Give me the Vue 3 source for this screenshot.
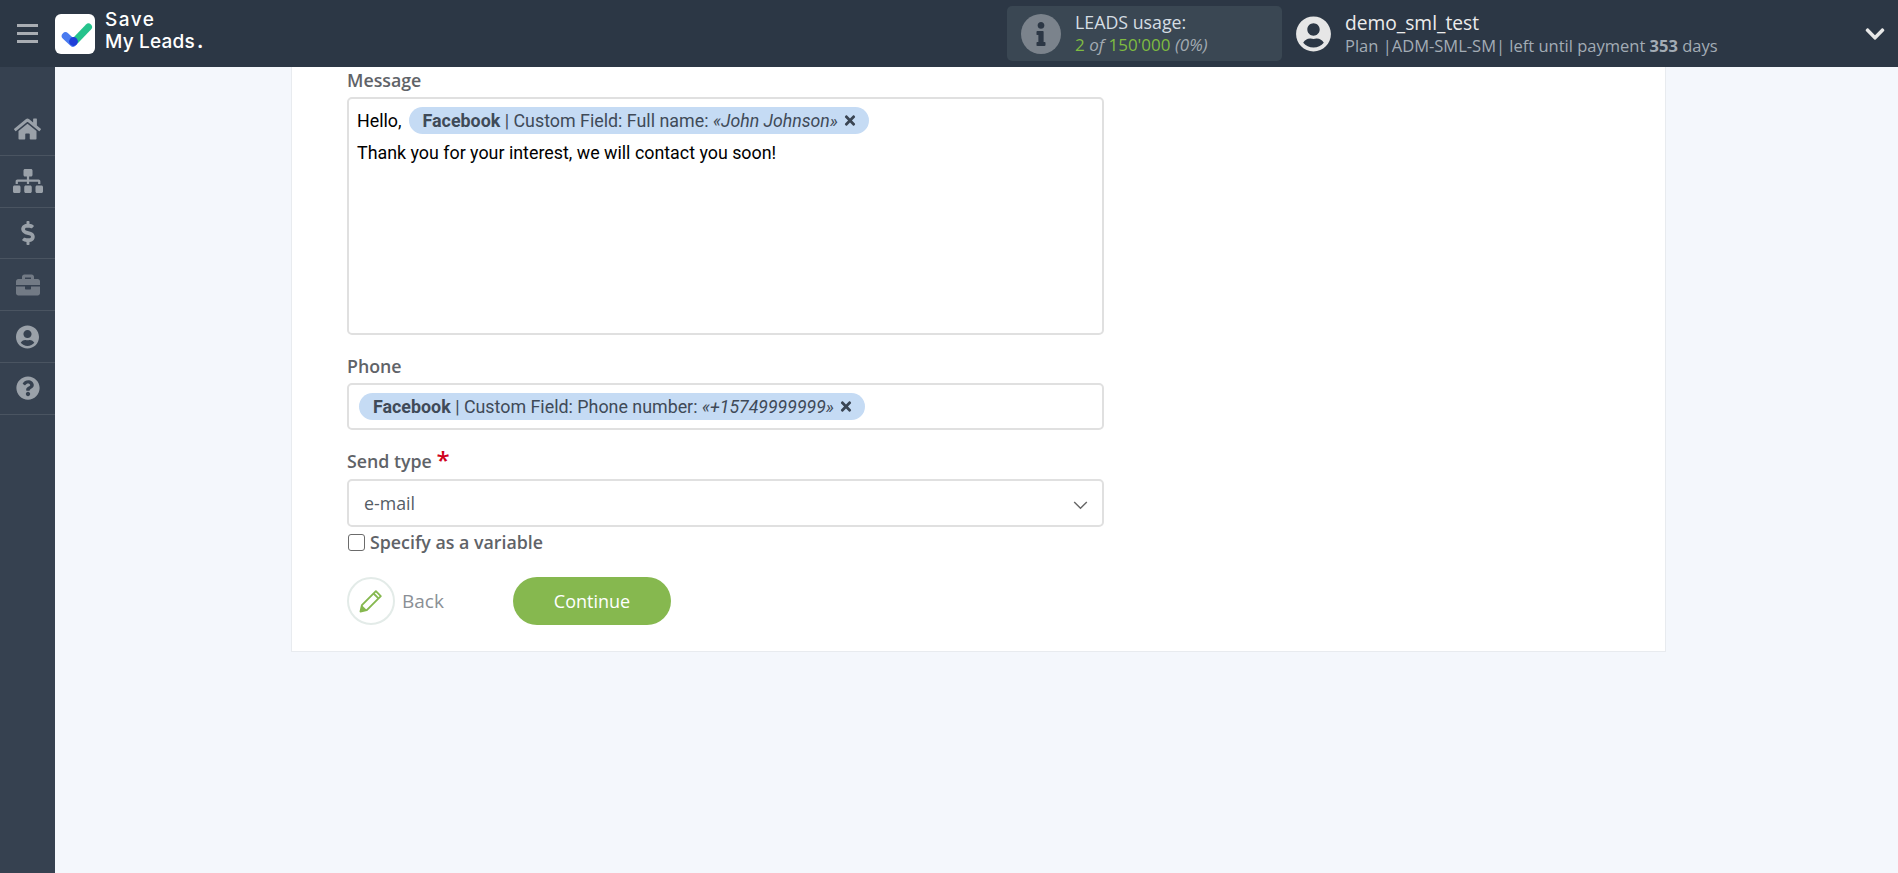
<script setup>
const nav = [
  { vb: '0 0 576 512', w: 29, op: 1, d: 'M280.37 148.26L96 300.11V464a16 16 0 0 0 16 16l112.06-.29a16 16 0 0 0 15.92-16V368a16 16 0 0 1 16-16h64a16 16 0 0 1 16 16v95.64a16 16 0 0 0 16 16.05L464 480a16 16 0 0 0 16-16V300L295.67 148.26a12.19 12.19 0 0 0-15.3 0zM571.6 251.47L488 182.56V44.05a12 12 0 0 0-12-12h-56a12 12 0 0 0-12 12v72.61L318.47 43a48 48 0 0 0-61 0L4.34 251.47a12 12 0 0 0-1.6 16.9l25.5 31A12 12 0 0 0 45.15 301l235.22-193.74a12.19 12.19 0 0 1 15.3 0L530.9 301a12 12 0 0 0 16.9-1.6l25.5-31a12 12 0 0 0-1.7-16.93z' },
  { vb: '0 0 640 512', w: 30, op: 1, d: 'M128 352H32c-17.67 0-32 14.33-32 32v96c0 17.67 14.33 32 32 32h96c17.67 0 32-14.33 32-32v-96c0-17.67-14.33-32-32-32zm-24-80h192v48h48v-48h192v48h48v-57.59c0-21.17-17.23-38.41-38.41-38.41H344v-64h40c17.67 0 32-14.33 32-32V32c0-17.67-14.33-32-32-32H256c-17.67 0-32 14.33-32 32v96c0 17.67 14.33 32 32 32h40v64H94.41C73.23 224 56 241.23 56 262.41V320h48v-48zm264 80h-96c-17.67 0-32 14.33-32 32v96c0 17.67 14.33 32 32 32h96c17.67 0 32-14.33 32-32v-96c0-17.67-14.33-32-32-32zm240 0h-96c-17.67 0-32 14.33-32 32v96c0 17.67 14.33 32 32 32h96c17.67 0 32-14.33 32-32v-96c0-17.67-14.33-32-32-32z' },
  { vb: '0 0 288 512', w: 14, op: 1, d: 'M209.2 233.4l-108-31.6C88.7 198.2 80 186.5 80 173.5c0-16.3 13.2-29.5 29.5-29.5h66.3c12.2 0 24.2 3.7 34.2 10.5 6.1 4.1 14.3 3.1 19.5-2l34.8-34c7.1-6.9 6.1-18.4-1.8-24.5C238 74.8 207.4 64.1 176 64V16c0-8.8-7.2-16-16-16h-32c-8.8 0-16 7.2-16 16v48h-2.5C45.8 64-5.4 118.7.5 183.6c4.2 46.1 39.4 83.6 83.8 96.6l102.5 30c12.5 3.7 21.2 15.3 21.2 28.3 0 16.3-13.2 29.5-29.5 29.5h-66.3C100 368 88 364.3 78 357.5c-6.1-4.1-14.3-3.1-19.5 2l-34.8 34c-7.1 6.9-6.1 18.4 1.8 24.5 24.5 19.2 55.1 29.9 86.5 30v48c0 8.8 7.2 16 16 16h32c8.8 0 16-7.2 16-16v-48.2c46.6-.9 90.3-28.6 105.7-72.7 21.5-61.6-14.6-124.8-72.5-141.7z' },
  { vb: '0 0 512 512', w: 24, op: 0.6, d: 'M320 336c0 8.84-7.16 16-16 16h-96c-8.84 0-16-7.16-16-16v-48H0v144c0 25.6 22.4 48 48 48h416c25.6 0 48-22.4 48-48V288H320v48zm144-208h-80V80c0-25.6-22.4-48-48-48H176c-25.6 0-48 22.4-48 48v48H48c-25.6 0-48 22.4-48 48v80h512v-80c0-25.6-22.4-48-48-48zm-144 0H192V96h128v32z' },
  { vb: '0 0 496 512', w: 23, op: 1, d: 'M248 8C111 8 0 119 0 256s111 248 248 248 248-111 248-248S385 8 248 8zm0 96c48.6 0 88 39.4 88 88s-39.4 88-88 88-88-39.4-88-88 39.4-88 88-88zm0 344c-58.7 0-111.3-26.6-146.5-68.2 18.8-35.4 55.6-59.8 98.5-59.8 2.4 0 4.8.4 7.1 1.1 13 4.2 26.6 6.9 40.9 6.9 14.3 0 28-2.7 40.9-6.9 2.3-.7 4.7-1.1 7.1-1.1 42.9 0 79.7 24.4 98.5 59.8C359.3 421.4 306.7 448 248 448z' },
  { vb: '0 0 512 512', w: 24, op: 1, d: 'M504 256c0 136.997-111.043 248-248 248S8 392.997 8 256C8 119.083 119.043 8 256 8s248 111.083 248 248zM262.655 90c-54.497 0-89.255 22.957-116.549 63.758-3.536 5.286-2.353 12.415 2.715 16.258l34.699 26.31c5.205 3.947 12.621 3.008 16.665-2.122 17.864-22.658 30.113-35.797 57.303-35.797 20.429 0 45.698 13.148 45.698 32.958 0 14.976-12.363 22.667-32.534 33.976C247.128 238.528 216 254.941 216 296v4c0 6.627 5.373 12 12 12h56c6.627 0 12-5.373 12-12v-1.333c0-28.462 83.186-29.647 83.186-106.667 0-58.002-60.165-102-116.531-102zM256 338c-25.365 0-46 20.635-46 46 0 25.364 20.635 46 46 46s46-20.636 46-46c0-25.365-20.635-46-46-46z' },
]
const times = 'M242.72 256l100.07-100.07c12.28-12.28 12.28-32.19 0-44.48l-22.24-22.24c-12.28-12.28-32.19-12.28-44.48 0L176 189.28 75.93 89.21c-12.28-12.28-32.19-12.28-44.48 0L9.21 111.45c-12.28 12.28-12.28 32.19 0 44.48L109.28 256 9.21 356.07c-12.28 12.28-12.28 32.19 0 44.48l22.24 22.24c12.28 12.28 32.2 12.28 44.48 0L176 322.72l100.07 100.07c12.28 12.28 32.2 12.28 44.48 0l22.24-22.24c12.28-12.28 12.28-32.19 0-44.48L242.72 256z'
</script>

<template>
  <div class="page">
    <header class="top">
      <div class="burger"><i></i><i></i><i></i></div>
      <div class="logo-box">
        <svg viewBox="0 0 40 40" width="40" height="40">
          <rect width="40" height="40" rx="6" fill="#fff" />
          <path d="M21 26 L33.5 13" stroke="#25c38c" stroke-width="7" stroke-linecap="round" fill="none" />
          <path d="M10.5 22 L18 29" stroke="#4a7bf0" stroke-width="7.5" stroke-linecap="round" fill="none" />
          <circle cx="18.5" cy="27.5" r="4.4" fill="#1f3fd8" />
        </svg>
      </div>
      <div class="logo-text"><div class="l1">Save</div><div class="l2">My Leads<span class="dot">.</span></div></div>
      <div class="usage">
        <div class="info-circle">
          <svg viewBox="0 0 192 512" width="10" height="24"><path fill="#2c3745" d="M20 424.229h20V279.771H20c-11.046 0-20-8.954-20-20V212c0-11.046 8.954-20 20-20h112c11.046 0 20 8.954 20 20v212.229h20c11.046 0 20 8.954 20 20V492c0 11.046-8.954 20-20 20H20c-11.046 0-20-8.954-20-20v-47.771c0-11.046 8.954-20 20-20zM96 0C56.235 0 24 32.235 24 72s32.235 72 72 72 72-32.235 72-72S135.764 0 96 0z" /></svg>
        </div>
        <div class="usage-text">
          <div class="usage-title">LEADS usage:</div>
          <div class="usage-num"><span class="g">2</span> <em>of</em> <span class="g">150'000</span> <em>(0%)</em></div>
        </div>
      </div>
      <svg class="avatar" viewBox="0 0 496 512" width="35" height="36"><path fill="#e6e6e6" d="M248 8C111 8 0 119 0 256s111 248 248 248 248-111 248-248S385 8 248 8zm0 96c48.6 0 88 39.4 88 88s-39.4 88-88 88-88-39.4-88-88 39.4-88 88-88zm0 344c-58.7 0-111.3-26.6-146.5-68.2 18.8-35.4 55.6-59.8 98.5-59.8 2.4 0 4.8.4 7.1 1.1 13 4.2 26.6 6.9 40.9 6.9 14.3 0 28-2.7 40.9-6.9 2.3-.7 4.7-1.1 7.1-1.1 42.9 0 79.7 24.4 98.5 59.8C359.3 421.4 306.7 448 248 448z" /></svg>
      <div class="user">
        <div class="user-name">demo_sml_test</div>
        <div class="user-plan">Plan |ADM-SML-SM| left until payment <b>353</b> days</div>
      </div>
      <svg class="chev" viewBox="0 0 448 512" width="20" height="22"><path fill="#e8e8e8" d="M207.029 381.476L12.686 187.132c-9.373-9.373-9.373-24.569 0-33.941l22.667-22.667c9.357-9.357 24.522-9.375 33.901-.04L224 284.505l154.745-154.021c9.379-9.335 24.544-9.317 33.901.04l22.667 22.667c9.373 9.373 9.373 24.569 0 33.941L240.971 381.476c-9.373 9.372-24.569 9.372-33.942 0z" /></svg>
    </header>

    <div class="body">
      <aside class="side">
        <div v-for="(n, i) in nav" :key="i" class="side-item">
          <svg :viewBox="n.vb" :width="n.w" height="24" :style="{ opacity: n.op }"><path fill="#9aa1a9" :d="n.d" /></svg>
        </div>
      </aside>
      <main class="main">
        <section class="card">
          <label class="lbl first">Message</label>
          <div class="box msg">
            <div class="line">Hello, <span class="tag tag-a"><b>Facebook</b> | Custom Field: Full name: <em>«John Johnson»</em><svg viewBox="0 0 352 512" width="12" height="15"><path fill="#3a4553" :d="times" /></svg></span></div>
            <div class="line2">Thank you for your interest, we will contact you soon!</div>
          </div>
          <label class="lbl ph">Phone</label>
          <div class="box phone">
            <span class="tag"><b>Facebook</b> | Custom Field: Phone number: <em>«+15749999999»</em><svg viewBox="0 0 352 512" width="12" height="15"><path fill="#3a4553" :d="times" /></svg></span>
          </div>
          <label class="lbl st">Send type <span class="req">*</span></label>
          <div class="box select">
            <span>e-mail</span>
            <svg viewBox="0 0 16 10" width="15" height="9"><path d="M1 1.2 L8 8 L15 1.2" fill="none" stroke="#666" stroke-width="1.6" /></svg>
          </div>
          <div class="check"><span class="cb"></span><span class="check-l">Specify as a variable</span></div>
          <div class="actions">
            <div class="back">
              <span class="circle">
                <svg viewBox="0 0 24 24" width="28" height="28"><g fill="none" stroke="#86b84f" stroke-width="1.6" stroke-linejoin="round"><path d="M3 21 L4.2 15.6 L16.2 3.6 L20.4 7.8 L8.4 19.8 Z" /><path d="M14.2 5.6 L18.4 9.8" /></g><path d="M3 21 L4.2 15.6 L8.4 19.8 Z" fill="#86b84f" /></svg>
              </span>
              <span class="back-l">Back</span>
            </div>
            <button class="cont">Continue</button>
          </div>
        </section>
      </main>
    </div>
  </div>
</template>

<style>
html, body { margin: 0; background: #f4f7fc; }
</style>

<style scoped>
.page { width: 1898px; height: 873px; display: flex; flex-direction: column; overflow: hidden; font-family: "Open Sans", sans-serif; }
.top { height: 67px; flex: none; background: #2c3745; display: flex; align-items: center; color: #fff; }
.burger { width: 21px; margin-left: 17px; display: flex; flex-direction: column; gap: 5px; }
.burger i { display: block; height: 3px; background: #a9adb3; }
.logo-box { margin-left: 17px; width: 40px; height: 40px; }
.logo-text { margin-left: 10px; font-family: Inter, sans-serif; font-weight: 500; font-size: 19px; line-height: 22px; width: 95px; margin-top: -6px; white-space: nowrap; }
.l1 { letter-spacing: 1.5px; }
.l2 { letter-spacing: 0.2px; }
.dot { margin-left: 2px; font-weight: 700; }
.usage { margin-left: 807px; width: 275px; height: 55px; background: #3a4753; border-radius: 5px; display: flex; align-items: center; box-sizing: border-box; padding-left: 14px; }
.info-circle { width: 40px; height: 40px; border-radius: 50%; background: #7b838c; display: flex; align-items: center; justify-content: center; }
.usage-text { margin-left: 14px; }
.usage-title { font-size: 17.8px; line-height: 23px; color: #d5dde3; }
.usage-num { font-size: 17px; line-height: 22px; color: #a3abb2; }
.usage-num em { font-style: italic; }
.g { color: #7fbb41; }
.avatar { margin-left: 14px; }
.user { margin-left: 14px; }
.user-name { font-size: 19.2px; line-height: 24px; color: #ececec; }
.user-plan { font-size: 16.5px; line-height: 21px; color: #a3acb5; }
.user-plan b { font-weight: 700; }
.chev { margin-left: auto; margin-right: 13px; }
.body { flex: 1; display: flex; min-height: 0; }
.side { width: 55px; flex: none; background: #364150; padding-top: 37px; box-sizing: border-box; }
.side-item { height: 51.8px; box-sizing: border-box; border-bottom: 1px solid #4a5461; display: flex; align-items: center; justify-content: center; }
.main { flex: 1; min-width: 0; }
.card { margin-left: 236px; width: 1375px; box-sizing: border-box; height: 585px; background: #fff; border: 1px solid #e8ebef; border-top: none; padding: 0 0 0 55px; }
.lbl { display: block; color: #5f6368; font-size: 17.8px; line-height: 22px; font-weight: 600; }
.first { padding-top: 2px; }
.ph { margin-top: 20px; }
.st { margin-top: 20px; }
.box { width: 757px; box-sizing: border-box; border: 2px solid #e0e0e0; border-radius: 5px; background: #fff; font-family: Roboto, sans-serif; }
.msg { height: 238px; margin-top: 6px; padding: 8px 8px; font-size: 17.85px; color: #000; }
.line { display: flex; align-items: center; gap: 7px; height: 27px; }
.line2 { margin-top: 8px; line-height: 22px; }
.tag { display: inline-flex; align-items: center; height: 27px; border-radius: 14px; background: #c5dbf4; color: #3f4a58; font-size: 17.85px; padding: 0 13px 0 14px; white-space: pre; }
.tag b { font-weight: 700; }
.tag em { font-style: italic; font-size: 17.7px; }
.tag svg { margin-left: 6px; }
.phone { height: 47px; margin-top: 6px; display: flex; align-items: center; padding-left: 10px; }
.select { height: 48px; margin-top: 7px; display: flex; align-items: center; justify-content: space-between; padding: 0 14px 0 15px; font-family: "Open Sans", sans-serif; font-size: 17.8px; color: #555d66; }
.select svg { margin-top: 4px; }
.req { color: #d0021b; font-size: 24px; line-height: 18px; vertical-align: -1px; }
.check { display: flex; align-items: center; height: 22px; margin-top: 4px; }
.cb { width: 15px; height: 15px; border: 1.5px solid #6b6b6b; border-radius: 3px; background: #fff; flex: none; margin-left: 1px; }
.check-l { margin-left: 5px; font-size: 17.8px; font-weight: 600; color: #5f6368; }
.actions { display: flex; align-items: center; margin-top: 24px; }
.back { display: flex; align-items: center; width: 166px; }
.circle { width: 48px; height: 48px; box-sizing: border-box; border: 2px solid #e3ebe8; border-radius: 50%; display: flex; align-items: center; justify-content: center; }
.back-l { margin-left: 7px; font-size: 19px; color: #8a8f95; }
.cont { width: 158px; height: 48px; border: none; border-radius: 24px; background: #86b84f; color: #fff; font-family: "Open Sans", sans-serif; font-size: 18px; padding: 0; }
</style>
